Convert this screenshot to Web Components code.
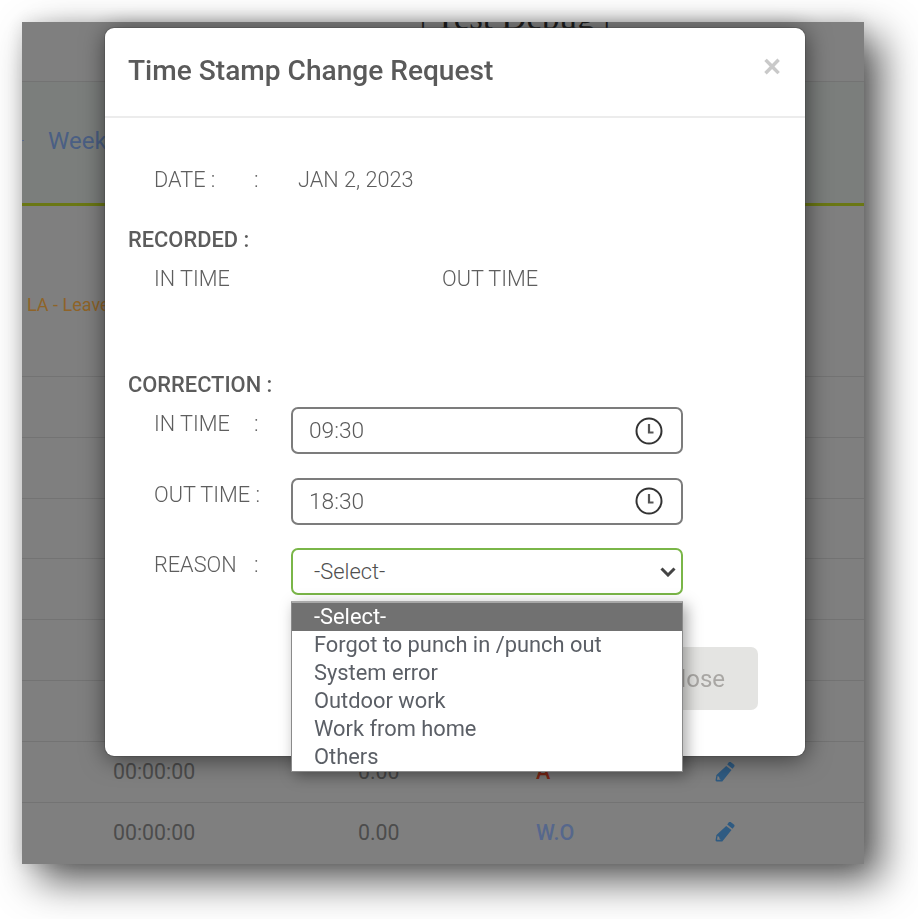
<!DOCTYPE html>
<html><head><meta charset="utf-8">
<style>
html,body{margin:0;padding:0;background:#fff;}
body{width:918px;height:919px;overflow:hidden;font-family:Roboto,"Liberation Sans",sans-serif;padding:22px;box-sizing:border-box;}
</style></head><body>
<shot-frame>
  <back-page></back-page>
  <time-modal></time-modal>
</shot-frame>
<script>
const pencil=`<svg width="20" height="20" viewBox="2 1.500 17 17"><path fill="#2f5b82" d="M13.900 1.600c.4-.4 1-.4 1.400 0l3 2.300c.4.400.4 1 .1 1.400l-1.500 1.900-4.500-3.500zM11.500 4.900l4.500 3.500-7.800 9.600H3.400c-.6 0-1-.5-.9-1.100l.7-4.400zM4.300 13.200l-.6 3.400h3.300l-1.100-.9-.3-1.300z"/></svg>`;
customElements.define('shot-frame',class extends HTMLElement{constructor(){super();this.attachShadow({mode:'open'}).innerHTML=`<style>
:host{display:block;position:relative;width:842px;height:842px;box-shadow:16px 16px 38px rgba(0,0,0,.68),0 0 18px rgba(0,0,0,.12);filter:blur(.4px)}
</style><slot></slot>`}});
customElements.define('table-row',class extends HTMLElement{constructor(){super();const m=this.getAttribute('mark')||'',c=this.getAttribute('tone')||'';this.attachShadow({mode:'open'}).innerHTML=`<style>
:host{display:grid;grid-template-columns:91px 245px 178px 179px 1fr;height:60.800px;box-sizing:border-box;border-top:1px solid #737373;align-items:center;font-size:21.300px;color:#4c4c4c}
.mk{font-weight:500;color:${c};justify-self:start;font-size:21.500px}
.ic{display:flex}
svg{display:block}
</style>${this.hasAttribute('data')?`<span></span><span>00:00:00</span><span>0.00</span><span class="mk">${m}</span><span class="ic">${pencil}</span>`:''}`}});
customElements.define('back-page',class extends HTMLElement{constructor(){super();this.attachShadow({mode:'open'}).innerHTML=`<style>
:host{display:block;width:842px;height:842px;background:#7f7f7f;overflow:hidden}
.top{height:60px;border-bottom:1px solid #737373;box-sizing:border-box;display:flex;justify-content:center;font:35px "Liberation Serif",serif;color:#1c1c1c;line-height:1}
.top span{margin-top:-22px;margin-left:144px;white-space:nowrap}
.tabs{height:124px;box-sizing:border-box;padding-bottom:4px;background:#7b7e7c;border-bottom:3px solid #6a7714;display:flex;align-items:center;font-size:24px;color:#4a5f84;line-height:26px}
.tick{width:2px;height:1px;background:#5a6a8a;margin-right:24px}
.legend{height:170px;box-sizing:border-box;padding:88px 0 0 5px;font-size:18px;color:#8f6428;line-height:22px}
</style>
<div class="top"><span>| Test Debug |</span></div>
<div class="tabs"><i class="tick"></i>Week</div>
<div class="legend">LA - Leave</div>
<table-row></table-row><table-row></table-row><table-row></table-row><table-row></table-row><table-row></table-row><table-row></table-row>
<table-row data mark="A" tone="#862a18"></table-row>
<table-row data mark="W.O" tone="#56678c"></table-row>`}});
customElements.define('clock-input',class extends HTMLElement{constructor(){super();this.attachShadow({mode:'open'}).innerHTML=`<style>
:host{display:flex;align-items:center;justify-content:space-between;width:392px;height:47px;box-sizing:border-box;border:2px solid #7c7c7c;border-radius:7px;padding:0 18px 0 16px;font-size:22.700px;font-weight:300;color:#5a5a5a;background:#fff}
svg{display:block}
</style><span><slot></slot></span><svg width="28" height="28" viewBox="0 0 28 28" fill="none" stroke="#333" stroke-width="2"><circle cx="14" cy="14" r="12.500"/><path d="M14 7V15.500H18.500" stroke="#555" stroke-width="2.200"/></svg>`}});
customElements.define('reason-select',class extends HTMLElement{constructor(){super();this.attachShadow({mode:'open'}).innerHTML=`<style>
:host{display:flex;align-items:center;justify-content:space-between;width:392px;height:47px;box-sizing:border-box;border:2px solid #7ab648;border-radius:7px;padding:0 5px 0 21px;font-size:21.850px;font-weight:300;color:#4f4f4f;background:#fff;position:relative}
svg{display:block}
.menu{position:absolute;left:-2px;top:51px;width:392px;box-sizing:border-box;border:1px solid #8a8a8a;background:#fff;box-shadow:4px 4px 14px rgba(0,0,0,.35);color:#5b5f66;font-weight:400;z-index:3;line-height:28px;height:171px;border-top:2px solid #a8a8a8}
.o{padding-left:22px;height:28px}
.sel{background:#717171;color:#fff}
</style><span>-Select-</span><svg width="16" height="10" viewBox="0 0 16 10" fill="none" stroke="#444" stroke-width="3"><path d="M1.500 1.500 8 8 14.500 1.500"/></svg>
<div class="menu"><div class="o sel">-Select-</div><div class="o">Forgot to punch in /punch out</div><div class="o">System error</div><div class="o">Outdoor work</div><div class="o">Work from home</div><div class="o">Others</div></div>`}});
customElements.define('time-modal',class extends HTMLElement{constructor(){super();this.attachShadow({mode:'open'}).innerHTML=`<style>
:host{display:block;position:absolute;left:83px;top:6px;width:700px;height:728px;background:#fff;border-radius:9px;box-shadow:0 0 0 1px rgba(60,60,60,.3),1px 3px 24px rgba(0,0,0,.55);color:#5e5e5e;font-size:21.700px;font-weight:300}
.head{height:88px;border-bottom:2px solid #ececec;display:flex;justify-content:space-between;padding:0 24px 0 23px}
h1{margin:0;font-size:28.100px;font-weight:500;color:#5a5a5a;line-height:33px;padding-top:26px}
.x{font-size:31px;font-weight:700;color:#c9c9c9;line-height:32px;padding-top:23px;font-family:"Liberation Sans",sans-serif}
.body{padding:0 22px 0 23px}
.row{display:flex;line-height:24px}
.l{font-weight:500;color:#5c5c5c;line-height:24px;font-size:21.850px}
.in{padding-left:26px}
.date{margin-top:50px;display:flex;line-height:24px;padding-left:26px}
.date .a{width:100px}.date .b{width:44px}
.form{display:grid;grid-template-columns:137px 392px;row-gap:23.500px;padding-left:26px;margin-top:10px}
.lab{display:flex;line-height:24px;padding-top:5px;white-space:nowrap}
.lab .t{width:100px}
.foot{display:flex;justify-content:flex-end;padding-right:25px;margin-top:52px}
.foot span{display:flex;align-items:center;justify-content:flex-end;width:150px;height:63px;background:#e4e4e2;border-radius:7px;padding-right:33px;box-sizing:border-box;font-size:24px;font-weight:400;color:#a9a7a4}
</style>
<div class="head"><h1>Time Stamp Change Request</h1><div class="x">×</div></div>
<div class="body">
<div class="date"><span class="a">DATE :</span><span class="b">:</span><span>JAN 2, 2023</span></div>
<div class="l" style="margin-top:36px">RECORDED :</div>
<div class="row in" style="margin-top:15px"><span style="width:288px">IN TIME</span><span>OUT TIME</span></div>
<div class="l" style="margin-top:82px">CORRECTION :</div>
<div class="form">
<div class="lab"><span class="t">IN TIME</span><span>:</span></div><clock-input>09:30</clock-input>
<div class="lab"><span class="t">OUT TIME :</span></div><clock-input>18:30</clock-input>
<div class="lab"><span class="t">REASON</span><span>:</span></div><reason-select></reason-select>
</div>
<div class="foot"><span>Close</span></div>
</div>`}});
</script></body></html>
